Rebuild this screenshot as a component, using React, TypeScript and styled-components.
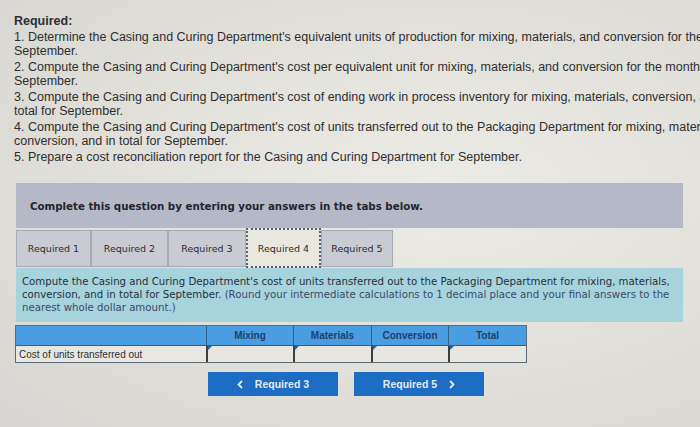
import styled, { createGlobalStyle } from "styled-components";

const GlobalStyle = createGlobalStyle`
  html, body {
    margin: 0;
    padding: 0;
    overflow: hidden;
    width: 700px;
    height: 427px;
  }
  body {
    background: radial-gradient(ellipse at 62% 45%, #ecebe6 0%, #e4e2dc 45%, #d6d5d1 100%);
    font-family: "Liberation Sans", Arial, sans-serif;
  }
`;

const Page = styled.div`
  width: 700px;
  height: 427px;
  padding: 14px 0 0 14px;
  box-sizing: border-box;
`;

const Requirements = styled.div`
  color: #2e2e30;
  font-size: 12.5px;
  line-height: 14px;
  white-space: nowrap;
`;

const Heading = styled.div`
  font-weight: bold;
  margin-bottom: 2px;
`;

const Item = styled.div`
  margin-bottom: 2px;
`;

const Prompt = styled.div`
  margin: 19px 17px 0 2px;
  height: 45px;
  background: #b5b8c6;
  display: flex;
  align-items: center;
  padding-left: 14px;
  font-family: "DejaVu Sans", Verdana, sans-serif;
  font-weight: bold;
  font-size: 10.25px;
  color: #23252b;
`;

const Tabs = styled.div`
  display: flex;
  margin: 2px 0 0 2px;
`;

const Tab = styled.div<{ $active?: boolean; $w: number }>`
  width: ${(p) => p.$w}px;
  box-sizing: border-box;
  display: flex;
  align-items: center;
  justify-content: center;
  font-family: "DejaVu Sans", Verdana, sans-serif;
  font-size: 9.5px;
  color: #2a2c33;
  background: ${(p) => (p.$active ? "#e9e8df" : "#c9cbd2")};
  border: ${(p) => (p.$active ? "2px dotted #5a5e78" : "1px solid #a8aab2")};
  margin-top: ${(p) => (p.$active ? "-2px" : "0")};
  height: ${(p) => (p.$active ? "40px" : "37px")};
`;

const Panel = styled.div`
  margin: 0 17px 0 2px;
  background: #a7d3dd;
  padding: 7px 6px 8px 6px;
  font-family: "DejaVu Sans", Verdana, sans-serif;
  font-size: 10.2px;
  line-height: 13px;
  color: #25303a;
  white-space: nowrap;
`;

const Note = styled.span`
  color: #3b4a66;
`;

const Table = styled.div`
  margin: 3px 0 0 1px;
  width: 510px;
  display: grid;
  grid-template-columns: 190px 87px 78px 77px 78px;
  border: 1px solid #5c6a78;
  font-family: "Liberation Sans", Arial, sans-serif;
  font-size: 10px;
`;

const HeadCell = styled.div<{ $first?: boolean }>`
  height: 19px;
  background: #4a9de0;
  color: #1c3f6e;
  font-weight: bold;
  display: flex;
  align-items: center;
  justify-content: center;
  border-left: ${(p) => (p.$first ? "none" : "1px solid #2f5f8e")};
  border-bottom: 1px solid #2f5f8e;
`;

const Label = styled.div`
  height: 16px;
  display: flex;
  align-items: center;
  padding-left: 3px;
  color: #2d3036;
  background: #e9e7e1;
`;

const Input = styled.div`
  position: relative;
  height: 16px;
  border-left: 2px solid #3b3f48;
  background: #e8e6e0;
  &::before {
    content: "";
    position: absolute;
    left: 0;
    top: 0;
    border-top: 4px solid #2b5e9a;
    border-right: 4px solid transparent;
  }
`;

const Nav = styled.div`
  display: flex;
  gap: 16px;
  margin: 9px 0 0 194px;
`;

const NavButton = styled.button`
  width: 130px;
  height: 24px;
  border: none;
  background: #1c6dc3;
  color: #e3ecf8;
  font-family: "Liberation Sans", Arial, sans-serif;
  font-weight: bold;
  font-size: 10.5px;
  display: flex;
  align-items: center;
  justify-content: center;
  gap: 12px;
  padding: 0;
`;

const Chevron = ({ dir }: { dir: "left" | "right" }) => (
  <svg width="6" height="9" viewBox="0 0 6 9">
    <path
      d={dir === "left" ? "M5 1 L1.5 4.5 L5 8" : "M1 1 L4.5 4.5 L1 8"}
      fill="none"
      stroke="#e3ecf8"
      strokeWidth="1.8"
    />
  </svg>
);

export default function App() {
  return (
    <>
      <GlobalStyle />
      <Page>
        <Requirements>
          <Heading>Required:</Heading>
          <Item>
            1. Determine the Casing and Curing Department's equivalent units of production for mixing, materials, and conversion for the
            <br />
            September.
          </Item>
          <Item>
            2. Compute the Casing and Curing Department's cost per equivalent unit for mixing, materials, and conversion for the month
            <br />
            September.
          </Item>
          <Item>
            3. Compute the Casing and Curing Department's cost of ending work in process inventory for mixing, materials, conversion, and
            <br />
            total for September.
          </Item>
          <Item>
            4. Compute the Casing and Curing Department's cost of units transferred out to the Packaging Department for mixing, materials,
            <br />
            conversion, and in total for September.
          </Item>
          <Item>5. Prepare a cost reconciliation report for the Casing and Curing Department for September.</Item>
        </Requirements>

        <Prompt>Complete this question by entering your answers in the tabs below.</Prompt>

        <Tabs>
          <Tab $w={75}>Required 1</Tab>
          <Tab $w={77}>Required 2</Tab>
          <Tab $w={78}>Required 3</Tab>
          <Tab $w={75} $active>
            Required 4
          </Tab>
          <Tab $w={72}>Required 5</Tab>
        </Tabs>

        <Panel>
          Compute the Casing and Curing Department's cost of units transferred out to the Packaging Department for mixing, materials,
          <br />
          conversion, and in total for September. <Note>(Round your intermediate calculations to 1 decimal place and your final answers to the</Note>
          <br />
          <Note>nearest whole dollar amount.)</Note>
        </Panel>

        <Table>
          <HeadCell $first />
          <HeadCell>Mixing</HeadCell>
          <HeadCell>Materials</HeadCell>
          <HeadCell>Conversion</HeadCell>
          <HeadCell>Total</HeadCell>
          <Label>Cost of units transferred out</Label>
          <Input />
          <Input />
          <Input />
          <Input />
        </Table>

        <Nav>
          <NavButton>
            <Chevron dir="left" />
            Required 3
          </NavButton>
          <NavButton>
            Required 5
            <Chevron dir="right" />
          </NavButton>
        </Nav>
      </Page>
    </>
  );
}
